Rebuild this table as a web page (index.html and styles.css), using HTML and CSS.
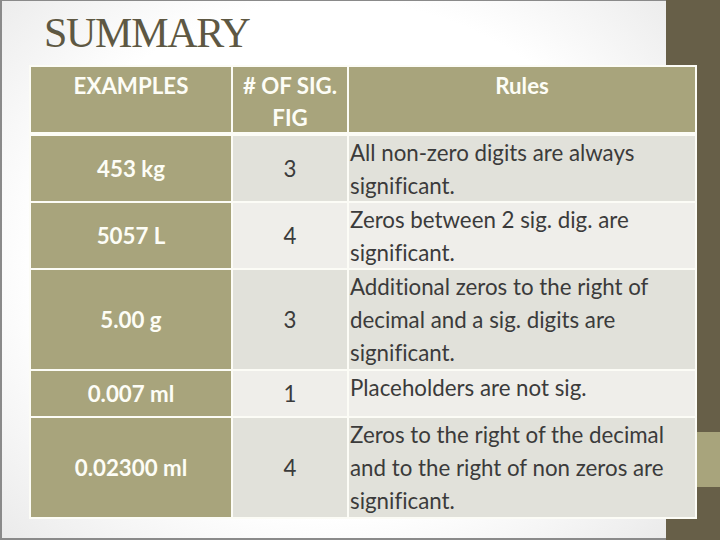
FILE: index.html
```html
<!DOCTYPE html>
<html lang="en">
<head>
<meta charset="utf-8">
<title>Summary</title>
<link rel="stylesheet" href="styles.css">
</head>
<body>
<div class="slide">
  <div class="main">
    <h1 class="title">SUMMARY</h1>
    <div class="table">
      <div class="cell head">EXAMPLES</div>
      <div class="cell head">#&nbsp;OF SIG.<br>FIG</div>
      <div class="cell head">Rules</div>

      <div class="cell ex">453 kg</div>
      <div class="cell num dark">3</div>
      <div class="cell rule dark">All non-zero digits are always significant.</div>

      <div class="cell ex">5057 L</div>
      <div class="cell num light">4</div>
      <div class="cell rule light">Zeros between 2 sig. dig. are significant.</div>

      <div class="cell ex">5.00 g</div>
      <div class="cell num dark">3</div>
      <div class="cell rule dark">Additional zeros to the right of decimal and a sig. digits are significant.</div>

      <div class="cell ex">0.007 ml</div>
      <div class="cell num light">1</div>
      <div class="cell rule light">Placeholders are not sig.</div>

      <div class="cell ex">0.02300 ml</div>
      <div class="cell num dark">4</div>
      <div class="cell rule dark">Zeros to the right of the decimal and to the right of non zeros are significant.</div>
    </div>
  </div>
  <div class="sidebar">
    <div class="band"></div>
  </div>
</div>
</body>
</html>
```

FILE: styles.css
```css
* { box-sizing: border-box; }

html, body {
  margin: 0;
  padding: 0;
  width: 720px;
  height: 540px;
  overflow: hidden;
  background: #ffffff;
}

.slide {
  display: flex;
  width: 720px;
  height: 540px;
}

.main {
  width: 666px;
  height: 540px;
  flex: none;
  border-top: 1px solid #8a8a8a;
  border-left: 2px solid #8a8a8a;
  border-bottom: 2px solid #8a8a8a;
  background: radial-gradient(ellipse 75% 80% at 50% 48%, #ffffff 60%, #e6e6e6 100%);
  padding: 0 0 0 27px;
}

.title {
  margin: 0;
  padding: 8px 0 0 15px;
  height: 64px;
  font-family: "Liberation Serif", "Times New Roman", serif;
  font-weight: normal;
  font-size: 42px;
  line-height: 48px;
  letter-spacing: -1.3px;
  color: #5e5843;
}

.table {
  position: relative;
  z-index: 2;
  width: 668px;
  display: grid;
  grid-template-columns: 200px 114px 346px;
  grid-template-rows: 67px 65px 65px 99px 45px 99px;
  gap: 2px;
  padding: 2px;
  background: #fcfcf6;
  font-family: Lato, "Liberation Sans", sans-serif;
  font-size: 22.3px;
  line-height: 33px;
  font-variant-ligatures: none;
}

.cell {
  color: #3b3b3b;
}

.head {
  background: #a8a47c;
  color: #fdfdf6;
  font-weight: 700;
  text-align: center;
  padding-top: 3px;
  line-height: 32px;
  border-bottom: 2px solid #fcfcf6;
}

.ex {
  background: #a8a47c;
  color: #fdfdf6;
  font-weight: 700;
  display: flex;
  align-items: center;
  justify-content: center;
}

.num {
  display: flex;
  align-items: center;
  justify-content: center;
}

.rule {
  padding: 0 4px 0 1px;
}

.dark { background: #e1e1da; }
.light { background: #efeeea; }

.sidebar {
  flex: none;
  width: 54px;
  height: 540px;
  background: #675f48;
  padding-top: 432px;
}

.band {
  height: 55px;
  background: #a8a47c;
}
```
